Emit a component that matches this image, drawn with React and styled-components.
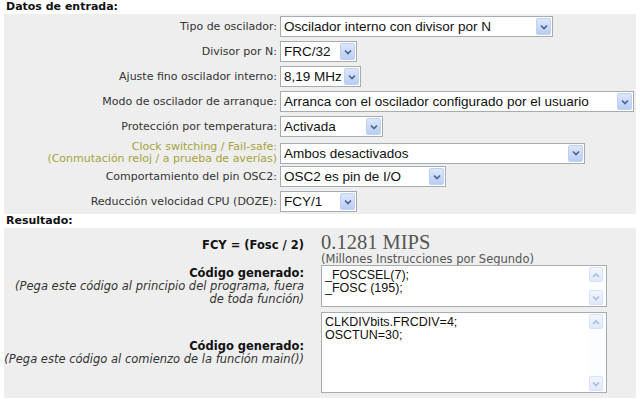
import React from "react";
import styled, { createGlobalStyle } from "styled-components";

const GlobalStyle = createGlobalStyle`
  html, body {
    margin: 0;
    padding: 0;
    background: #fff;
  }
  body {
    font-family: "DejaVu Sans", Verdana, sans-serif;
    font-size: 11px;
    color: #333;
  }
`;

const Page = styled.div`
  width: 640px;
  height: 402px;
  overflow: hidden;
`;

const Heading = styled.div`
  font-weight: bold;
  font-size: 11px;
  line-height: 14px;
  padding-left: 6px;
  color: #111;
`;

const Panel = styled.div`
  margin: 0 4px;
  background: #eeeeee;
  display: flex;
  flex-direction: column;
  gap: ${({ $gap }) => $gap}px;
  padding: ${({ $pad }) => $pad};
`;

const FormRow = styled.div`
  display: grid;
  grid-template-columns: 273px auto;
  column-gap: 3px;
  align-items: center;
  height: 21px;
`;

const Label = styled.div`
  text-align: right;
  white-space: nowrap;
  line-height: ${({ $lines }) => ($lines > 1 ? "12px" : "13px")};
  color: ${({ $warn }) => ($warn ? "#a6a33c" : "#333")};
`;

const SelectBox = styled.div`
  box-sizing: border-box;
  width: ${({ $w }) => $w}px;
  height: 21px;
  border: 1px solid #a5acb2;
  background: #fff;
  display: flex;
  align-items: center;
  padding: 0 1px 0 3px;
  font-family: "Liberation Sans", Arial, sans-serif;
  font-size: 13.5px;
  color: #111;
  white-space: nowrap;
`;

const SelectText = styled.span`
  flex: 1;
  overflow: hidden;
`;

const ArrowButton = styled.div`
  box-sizing: border-box;
  flex: none;
  width: ${({ $small }) => ($small ? 14 : 15)}px;
  height: ${({ $small }) => ($small ? 15 : 17)}px;
  border: 1px solid ${({ $pale }) => ($pale ? "#d8e2f6" : "#c0d0f2")};
  border-radius: 2px;
  background: ${({ $pale }) =>
    $pale
      ? "linear-gradient(#f2f6fe, #dfe8fb)"
      : "linear-gradient(#dce7fd, #b9cdf5)"};
  display: flex;
  align-items: center;
  justify-content: center;
`;

const ResultRow = styled.div`
  display: grid;
  grid-template-columns: 300px auto;
  column-gap: 17px;
  align-items: center;
  margin-bottom: ${({ $pull }) => ($pull ? `-${$pull}px` : "0")};
`;

const ResultLabel = styled.div`
  text-align: right;
  white-space: nowrap;
  line-height: 13px;
  color: #222;
  align-self: ${({ $top }) => ($top ? "start" : "center")};
  margin-top: ${({ $top }) => ($top ? "7px" : "0")};
`;

const Strong = styled.div`
  font-weight: bold;
  font-size: 11.5px;
  color: #111;
`;

const Note = styled.div`
  font-style: italic;
  font-size: 11.5px;
  color: #333;
`;

const Mips = styled.div`
  font-family: "Liberation Serif", "Times New Roman", serif;
  font-size: 20.5px;
  line-height: 21px;
  color: #555;
`;

const MipsNote = styled.div`
  font-size: 11.5px;
  line-height: 13px;
  color: #555;
`;

const CodeBox = styled.div`
  box-sizing: border-box;
  width: 286px;
  height: ${({ $h }) => $h}px;
  border: 1px solid #a5acb2;
  background: #fff;
  display: flex;
`;

const Code = styled.div`
  flex: 1;
  padding: 3px 3px;
  font-family: "Liberation Sans", Arial, sans-serif;
  font-size: 12.5px;
  line-height: 13px;
  color: #111;
  white-space: pre;
`;

const ScrollTrack = styled.div`
  width: 16px;
  padding: 1px 1px 1px 0;
  display: flex;
  flex-direction: column;
  justify-content: space-between;
  background: #fcfdff;
`;

const Chevron = ({ up, color = "#4d6185" }) => (
  <svg width="8" height="6" viewBox="0 0 8 6">
    <path
      d={up ? "M1 5 L4 2 L7 5" : "M1 1.5 L4 4.5 L7 1.5"}
      fill="none"
      stroke={color}
      strokeWidth="1.6"
    />
  </svg>
);

const Select = ({ width, value }) => (
  <SelectBox $w={width}>
    <SelectText>{value}</SelectText>
    <ArrowButton>
      <Chevron />
    </ArrowButton>
  </SelectBox>
);

const CodeArea = ({ height, code }) => (
  <CodeBox $h={height}>
    <Code>{code}</Code>
    <ScrollTrack>
      <ArrowButton $small $pale>
        <Chevron up color="#a9bbe0" />
      </ArrowButton>
      <ArrowButton $small $pale>
        <Chevron color="#a9bbe0" />
      </ArrowButton>
    </ScrollTrack>
  </CodeBox>
);

const inputs = [
  { label: ["Tipo de oscilador:"], value: "Oscilador interno con divisor por N", width: 273 },
  { label: ["Divisor por N:"], value: "FRC/32", width: 77 },
  { label: ["Ajuste fino oscilador interno:"], value: "8,19 MHz", width: 81 },
  { label: ["Modo de oscilador de arranque:"], value: "Arranca con el oscilador configurado por el usuario", width: 354 },
  { label: ["Protección por temperatura:"], value: "Activada", width: 103 },
  {
    label: ["Clock switching / Fail-safe:", "(Conmutación reloj / a prueba de averías)"],
    value: "Ambos desactivados",
    width: 305,
    warn: true,
  },
  { label: ["Comportamiento del pin OSC2:"], value: "OSC2 es pin de I/O", width: 166 },
  { label: ["Reducción velocidad CPU (DOZE):"], value: "FCY/1", width: 77 },
];

export default function App() {
  return (
    <Page>
      <GlobalStyle />
      <Heading>Datos de entrada:</Heading>
      <Panel $gap={4} $pad="2px 0 2px">
        {inputs.map((row) => (
          <FormRow key={row.label[0]}>
            <Label $lines={row.label.length} $warn={row.warn}>
              {row.label.map((line) => (
                <div key={line}>{line}</div>
              ))}
            </Label>
            <Select width={row.width} value={row.value} />
          </FormRow>
        ))}
      </Panel>
      <Heading>Resultado:</Heading>
      <Panel $gap={5} $pad="4px 0 5px">
        <ResultRow $pull={6}>
          <ResultLabel $top>
            <Strong>FCY = (Fosc / 2)</Strong>
          </ResultLabel>
          <div>
            <Mips>0.1281 MIPS</Mips>
            <MipsNote>(Millones Instrucciones por Segundo)</MipsNote>
          </div>
        </ResultRow>
        <ResultRow>
          <ResultLabel>
            <Strong>Código generado:</Strong>
            <Note>
              (Pega este código al principio del programa, fuera
              <br />
              de toda función)
            </Note>
          </ResultLabel>
          <CodeArea height={42} code={"_FOSCSEL(7);\n_FOSC (195);"} />
        </ResultRow>
        <ResultRow>
          <ResultLabel>
            <Strong>Código generado:</Strong>
            <Note>(Pega este código al comienzo de la función main())</Note>
          </ResultLabel>
          <CodeArea height={81} code={"CLKDIVbits.FRCDIV=4;\nOSCTUN=30;"} />
        </ResultRow>
      </Panel>
    </Page>
  );
}
